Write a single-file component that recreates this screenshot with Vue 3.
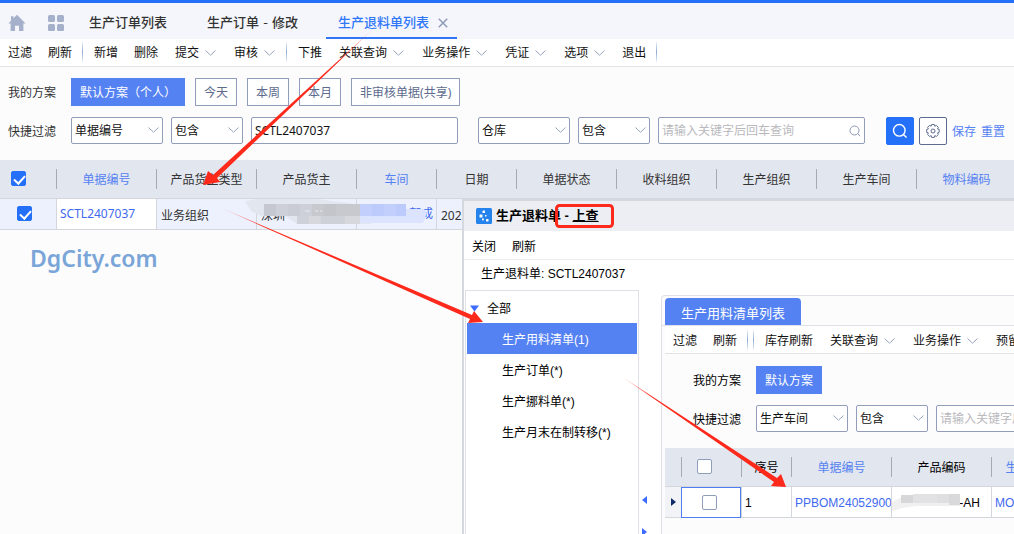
<script setup>
import { ref } from 'vue'

const tabs = ['生产订单列表', '生产订单 - 修改', '生产退料单列表']
const activeTab = ref(2)

const toolbar = [
  { text: '过滤' },
  { text: '刷新' },
  { sep: true },
  { text: '新增' },
  { text: '删除' },
  { text: '提交', menu: true },
  { text: '审核', menu: true },
  { sep: true },
  { text: '下推' },
  { text: '关联查询', menu: true },
  { text: '业务操作', menu: true },
  { text: '凭证', menu: true },
  { text: '选项', menu: true },
  { text: '退出' },
  { sep: true },
]
const innerToolbar = [
  { text: '过滤' },
  { text: '刷新' },
  { sep: true },
  { sep: true },
  { text: '库存刷新' },
  { text: '关联查询', menu: true },
  { text: '业务操作', menu: true },
  { text: '预留', menu: true },
]
const schemes = ['默认方案（个人）', '今天', '本周', '本月', '非审核单据(共享)']
const columns = [
  { text: '单据编号', link: true },
  { text: '产品货主类型' },
  { text: '产品货主' },
  { text: '车间', link: true, narrow: true },
  { text: '日期', narrow: true },
  { text: '单据状态' },
  { text: '收料组织' },
  { text: '生产组织' },
  { text: '生产车间' },
  { text: '物料编码', link: true },
]
const tree = ['生产用料清单(1)', '生产订单(*)', '生产挪料单(*)', '生产月末在制转移(*)']
const activeNode = ref(0)
const keyword = ref('SCTL2407037')
const allChecked = ref(true)
const rowChecked = ref(true)
</script>

<template>
  <div class="page">
    <nav class="tabs">
      <button class="icon-btn" aria-label="首页">
        <svg width="18" height="18" viewBox="0 0 18 18"><path d="M9 .8 17.6 9.4H15.400V17h-4.400v-5.200H7V17H2.600V9.400H.4L3 6.800V2.200h2.500v2.100z" fill="#a5b0cb" /></svg>
      </button>
      <button class="icon-btn" aria-label="应用">
        <svg width="18" height="18" viewBox="0 0 18 18" fill="#a5b0cb"><rect x="1" y="1" width="7" height="7" rx="1.500" /><rect x="10" y="1" width="7" height="7" rx="1.500" /><rect x="1" y="10" width="7" height="7" rx="1.500" /><rect x="10" y="10" width="7" height="7" rx="1.500" /></svg>
      </button>
      <button v-for="(t, i) in tabs" :key="t" class="tab" :class="{ active: i === activeTab }" @click="activeTab = i">
        {{ t }}
        <svg v-if="i === activeTab" class="close" width="10" height="10" viewBox="0 0 10 10"><path d="M.8.8l8.400 8.400M9.200.8.8 9.200" stroke="#8f9bb8" stroke-width="1.500" /></svg>
      </button>
    </nav>

    <div class="toolbar">
      <template v-for="(b, i) in toolbar" :key="i">
        <i v-if="b.sep" class="sep"></i>
        <button v-else class="tool" :class="{ menu: b.menu }">
          {{ b.text }}
          <svg v-if="b.menu" width="11" height="6" viewBox="0 0 11 6"><path d="M.5.5l5 4.700 5-4.700" fill="none" stroke="#98a4bf" /></svg>
        </button>
      </template>
    </div>

    <section class="filters">
      <div class="line">
        <span class="label">我的方案</span>
        <button v-for="(s, i) in schemes" :key="s" class="scheme" :class="{ on: i === 0 }">{{ s }}</button>
      </div>
      <div class="line quick">
        <span class="label">快捷过滤</span>
        <span class="select wide"><select aria-label="字段"><option>单据编号</option></select><svg width="11" height="6" viewBox="0 0 11 6"><path d="M.5.5l5 4.700 5-4.700" fill="none" stroke="#98a4bf" /></svg></span>
        <span class="select"><select aria-label="条件"><option>包含</option></select><svg width="11" height="6" viewBox="0 0 11 6"><path d="M.5.5l5 4.700 5-4.700" fill="none" stroke="#98a4bf" /></svg></span>
        <span class="field"><input v-model="keyword" type="text" aria-label="单据编号值" /></span>
        <span class="select wide second"><select aria-label="字段二"><option>仓库</option></select><svg width="11" height="6" viewBox="0 0 11 6"><path d="M.5.5l5 4.700 5-4.700" fill="none" stroke="#98a4bf" /></svg></span>
        <span class="select"><select aria-label="条件二"><option>包含</option></select><svg width="11" height="6" viewBox="0 0 11 6"><path d="M.5.5l5 4.700 5-4.700" fill="none" stroke="#98a4bf" /></svg></span>
        <span class="field">
          <input type="text" aria-label="仓库值" placeholder="请输入关键字后回车查询" />
          <svg class="glass" width="12" height="12" viewBox="0 0 12 12" fill="none" stroke="#8c98b5"><circle cx="5.500" cy="5.500" r="4.500" /><path d="M8.600 8.600 11.200 11.200" /></svg>
        </span>
        <button class="square search" aria-label="查询">
          <svg width="16" height="16" viewBox="0 0 16 16" fill="none" stroke="#fff" stroke-width="1.400"><circle cx="7.300" cy="7.300" r="5.800" /><path d="M11.400 11.400 14.600 14.600" /></svg>
        </button>
        <button class="square" aria-label="设置">
          <svg width="16" height="16" viewBox="0 0 16 16" fill="none" stroke="#5d6b8e"><path d="M6.700 1.500h2.600l.5 1.700 1.600-.8 1.900 1.900-.8 1.600 1.700.6v2.800l-1.700.6.8 1.600-1.900 1.900-1.600-.8-.5 1.800H6.700l-.6-1.800-1.600.8-1.900-1.900.8-1.600-1.700-.6V6.500l1.700-.6-.8-1.600 1.900-1.900 1.600.8z" stroke-linejoin="round" /><circle cx="8" cy="8" r="2" /></svg>
        </button>
        <a href="#" class="act">保存</a>
        <a href="#" class="act">重置</a>
      </div>
    </section>

    <div class="grid-wrap">
      <table class="grid">
        <colgroup>
          <col class="c-check" />
          <col v-for="c in columns" :key="c.text" :class="c.narrow ? 'c-narrow' : 'c-normal'" />
        </colgroup>
        <thead>
          <tr>
            <th class="check-head"><input v-model="allChecked" type="checkbox" aria-label="全选" /></th>
            <th v-for="c in columns" :key="c.text" :class="{ link: c.link }"><span>{{ c.text }}</span></th>
          </tr>
        </thead>
        <tbody>
          <tr>
            <td class="check-cell"><input v-model="rowChecked" type="checkbox" aria-label="选择 SCTL2407037" /></td>
            <td class="current"><a href="#">SCTL2407037</a></td>
            <td>业务组织</td>
            <td class="masked">
              深圳
              <svg class="mosaic" width="180" height="30" viewBox="0 0 180 30">
                <path d="M-12 2 0 0h60l38 5 16 0v20H40L28 17H4L-6 12z" fill="#e2e6ef" />
                <path d="M7 5h48v12H7z" fill="#cdd0d8" /><path d="M7 5h12v12H7z" fill="#c5c8d0" /><path d="M31 5h12v12H31z" fill="#c9ccd4" />
                <path d="M55 5h48v12H55z" fill="#c8c9ce" /><path d="M67 5h12v12H67z" fill="#c3c5cb" />
                <path d="M40 17h63v8H40z" fill="#cfd1d8" /><path d="M52 17h12v8H52zM88 17h15v8H88z" fill="#d6d8de" />
                <path d="M103 5h46v5h18l3 4-4 10-18 0h-45z" fill="#dbe3fe" />
                <path d="M103 5h46v12h-46z" fill="#c2cffd" /><path d="M115 5h12v12h-12zM139 5h10v12h-10z" fill="#bdcafc" />
                <path d="M48 12h5m5 0h3m2 0h2" stroke="#e8eaee" />
              </svg>
            </td>
            <td class="workshop"><a href="#">部成</a></td>
            <td>202</td>
            <td></td>
            <td></td>
            <td></td>
            <td></td>
            <td></td>
          </tr>
        </tbody>
      </table>
    </div>
    <p class="brand">DgCity.com</p>

    <div class="dialog" role="dialog" aria-label="生产退料单 - 上查">
      <header class="title">
        <svg width="16" height="16" viewBox="0 0 16 16"><rect width="16" height="16" rx="1.500" fill="#2583ee" /><g fill="#fff"><rect x="6.500" y="2.500" width="2.500" height="2.500" rx=".5" /><rect x="3.500" y="6.500" width="3" height="3" rx=".5" /><rect x="9" y="7" width="1.500" height="1.500" /><rect x="6" y="10.500" width="1.800" height="1.800" /><rect x="10" y="11" width="2.500" height="2.500" rx=".5" /></g></svg>
        <h1>生产退料单 - <u>上查</u></h1>
      </header>
      <div class="dialog-bar">
        <button class="tool">关闭</button>
        <button class="tool">刷新</button>
      </div>
      <div class="info">生产退料单: SCTL2407037</div>
      <div class="dialog-body">
        <aside class="tree">
          <button class="node root"><svg width="9" height="7" viewBox="0 0 9 7"><path d="M0 .5h9L4.500 6.500z" fill="#3d6bff" /></svg>全部</button>
          <button v-for="(n, i) in tree" :key="n" class="node" :class="{ on: i === activeNode }" @click="activeNode = i">{{ n }}</button>
        </aside>
        <div class="splitter">
          <svg width="5" height="8" viewBox="0 0 5 8"><path d="M5 0v8L0 4z" fill="#3d6bff" /></svg>
          <svg width="5" height="8" viewBox="0 0 5 8"><path d="M0 0v8l5-4z" fill="#3d6bff" /></svg>
        </div>
        <main class="panel">
          <div class="panel-tabs"><button>生产用料清单列表</button></div>
          <div class="toolbar inner-bar">
            <template v-for="(b, i) in innerToolbar" :key="i">
              <i v-if="b.sep" class="sep"></i>
              <button v-else class="tool" :class="{ menu: b.menu }">
                {{ b.text }}
                <svg v-if="b.menu" width="11" height="6" viewBox="0 0 11 6"><path d="M.5.5l5 4.700 5-4.700" fill="none" stroke="#98a4bf" /></svg>
              </button>
            </template>
          </div>
          <section class="filters">
            <div class="line">
              <span class="label">我的方案</span>
              <button class="scheme on">默认方案</button>
            </div>
            <div class="line quick">
              <span class="label">快捷过滤</span>
              <span class="select wide"><select aria-label="字段三"><option>生产车间</option></select><svg width="11" height="6" viewBox="0 0 11 6"><path d="M.5.5l5 4.700 5-4.700" fill="none" stroke="#98a4bf" /></svg></span>
              <span class="select"><select aria-label="条件三"><option>包含</option></select><svg width="11" height="6" viewBox="0 0 11 6"><path d="M.5.5l5 4.700 5-4.700" fill="none" stroke="#98a4bf" /></svg></span>
              <span class="field"><input type="text" aria-label="生产车间值" placeholder="请输入关键字后回车查询" /></span>
            </div>
          </section>
          <div class="inner-grid">
            <table class="grid">
              <colgroup><col class="c-mark" /><col class="c-box" /><col class="c-no" /><col class="c-normal" /><col class="c-normal" /><col class="c-normal" /></colgroup>
              <thead>
                <tr>
                  <th></th>
                  <th class="box-head"><span><input type="checkbox" aria-label="全选用料清单" /></span></th>
                  <th><span>序号</span></th>
                  <th class="link"><span>单据编号</span></th>
                  <th><span>产品编码</span></th>
                  <th class="link"><span>生产订单编号</span></th>
                </tr>
              </thead>
              <tbody>
                <tr>
                  <td class="mark"><svg width="5" height="8" viewBox="0 0 5 8"><path d="M0 0v8l5-4z" fill="#0f2c66" /></svg></td>
                  <td class="focus"><input type="checkbox" aria-label="选择第 1 行" /></td>
                  <td>1</td>
                  <td><a href="#">PPBOM24052900</a></td>
                  <td class="code">
                    -AH
                    <svg class="mosaic" width="72" height="24" viewBox="0 0 72 24"><path d="M-2 12 10 6l16-3h42v12H24L10 17-2 21z" fill="#f0f0f1" /><rect x="9" y="4" width="12" height="8" fill="#d7d7d9" /><path d="M21 3h12v9H21zM33 3h12v9H33z" fill="#e2e2e4" /><rect x="45" y="3" width="12" height="9" fill="#dfdfe1" /><rect x="57" y="3" width="11" height="11" fill="#d9d9db" /></svg>
                  </td>
                  <td><a href="#">MO240529001</a></td>
                </tr>
              </tbody>
            </table>
          </div>
        </main>
      </div>
    </div>

    <svg class="notes" width="1014" height="534" viewBox="0 0 1014 534">
      <defs>
        <linearGradient id="g1" gradientUnits="userSpaceOnUse" x1="373" y1="29" x2="340" y2="60"><stop offset="0" stop-color="#fd2a1c" stop-opacity=".2" /><stop offset="1" stop-color="#fd2a1c" /></linearGradient>
        <linearGradient id="g2" gradientUnits="userSpaceOnUse" x1="220" y1="208" x2="262" y2="226"><stop offset="0" stop-color="#fd2a1c" stop-opacity=".2" /><stop offset="1" stop-color="#fd2a1c" /></linearGradient>
        <linearGradient id="g3" gradientUnits="userSpaceOnUse" x1="621" y1="376" x2="650" y2="395"><stop offset="0" stop-color="#fd2a1c" stop-opacity=".2" /><stop offset="1" stop-color="#fd2a1c" /></linearGradient>
      </defs>
      <path d="M373 29 213 175 208 171 203 185 220 182 217 178z" fill="url(#g1)" />
      <path d="M220 207.500 472 315 474 311 483 322 468 323 470 319z" fill="url(#g2)" />
      <path d="M621 376 777 478 781 474 786 487 771 486 774 482z" fill="url(#g3)" />
      <rect x="556.500" y="205.500" width="56" height="21" rx="3" fill="none" stroke="#fd2a1c" stroke-width="3" />
    </svg>
  </div>
</template>

<style>
html,
body {
  overflow: hidden;
}
</style>

<style scoped>
.page,
.page * {
  box-sizing: border-box;
}
.page {
  position: relative;
  height: 100vh;
  overflow: hidden;
  border-top: 3px solid #2570f8;
  background: #fcfcfd;
  color: #333;
  font: 12px/20px 'Noto Sans', 'Noto Sans CJK SC', sans-serif;
}
button,
input,
select {
  margin: 0;
  padding: 0;
  border: 0;
  background: none;
  color: inherit;
  font: inherit;
  white-space: nowrap;
}
a {
  color: #3f69f0;
  text-decoration: none;
}
svg {
  flex: none;
}

.tabs {
  display: flex;
  height: 36px;
  background: #f5f6fb;
}
.icon-btn {
  display: flex;
  flex: none;
  align-items: center;
  width: 39px;
  padding: 4px 0 0 8px;
}
.icon-btn:nth-child(2) {
  width: 38px;
}
.tab {
  display: flex;
  align-items: center;
  gap: 9px;
  padding: 6px 28px 0 12px;
  border-bottom: 2px solid transparent;
  font-family: 'DejaVu Sans', 'Noto Sans CJK SC', sans-serif;
  font-size: 13px;
  font-weight: 500;
}
.tab.active {
  padding-right: 9px;
  border-color: #2f76f8;
  color: #2f76f8;
}

.toolbar {
  display: flex;
  height: 28px;
  border-bottom: 1px solid #e3e3e6;
  background: #fff;
  color: #111;
}
.toolbar > * {
  flex: none;
}
.tool {
  display: flex;
  align-items: center;
  gap: 6px;
  padding: 0 8px;
}
.tool.menu {
  padding: 0 9px;
}
.sep {
  width: 1px;
  height: 20px;
  margin: 3px 3px 3px 2px;
  background: linear-gradient(#e6effc, #8fa9d0, #e6effc);
}

.filters {
  padding: 11px 0 15px 8px;
}
.line {
  display: flex;
  gap: 10px;
}
.line > * {
  flex: none;
}
.quick {
  gap: 8px;
  height: 28px;
  margin-top: 11px;
}
.label {
  width: 53px;
  line-height: 30px;
  height: 28px;
}
.quick .label {
  width: 55px;
}
.scheme {
  height: 28px;
  padding: 1px 8px 0;
  border: 1px solid #8f9dbb;
  background: #fff;
  color: #5d6b8e;
}
.scheme.on {
  border-color: #5582f3;
  background: #5582f3;
  color: #fff;
}
.select {
  position: relative;
  width: 72px;
  height: 27px;
}
.select.wide {
  width: 92px;
}
.second {
  margin-left: 12px;
}
.select select,
.field input {
  width: 100%;
  height: 27px;
  padding: 0 3px;
  border: 1px solid #919dba;
  border-radius: 2px;
  appearance: none;
  background: #fff;
  color: #111;
}
.select svg {
  position: absolute;
  top: 10px;
  right: 4px;
  pointer-events: none;
}
.field {
  position: relative;
  width: 207px;
}
.field input::placeholder {
  color: #b9b9bd;
  opacity: 1;
}
.glass {
  position: absolute;
  top: 8px;
  right: 4px;
}
.square {
  display: flex;
  align-items: center;
  justify-content: center;
  width: 28px;
  height: 28px;
  border: 1px solid #5d6b8e;
  border-radius: 2px;
  background: #fff;
}
.square.search {
  margin-left: 13px;
  border-color: #2570f8;
  background: #2570f8;
}
.square + .square {
  margin-left: -3px;
}
.act {
  margin-left: -3px;
  color: #5582f3;
  line-height: 30px;
}

.grid-wrap,
.inner-grid {
  overflow: hidden;
}
.grid {
  table-layout: fixed;
  width: 0;
  min-width: 100%;
  border-spacing: 0;
}
.c-check {
  width: 56px;
}
.c-normal {
  width: 100px;
}
.c-narrow {
  width: 80px;
}
.c-mark {
  width: 16px;
}
.c-box {
  width: 60px;
}
.c-no {
  width: 50px;
}
th {
  height: 39px;
  padding: 0;
  border-bottom: 1px solid #d3d6dd;
  background: #e2e6ee;
  font-weight: 400;
}
th span {
  display: block;
  height: 20px;
  overflow: hidden;
  border-left: 1px solid #a5aab5;
  line-height: 22px;
  white-space: nowrap;
}
th.link {
  color: #5582f3;
}
td {
  height: 31px;
  padding: 4px 0 0 4px;
  overflow: hidden;
  border-bottom: 1px solid #d3d6dd;
  border-left: 1px solid #d3d6dd;
  background: #edf1fd;
  white-space: nowrap;
}
td.current {
  padding: 0 0 0 3px;
  background: #fff;
}
th.check-head {
  padding: 0 0 2px 11px;
  text-align: left;
}
td.check-cell {
  padding: 0 0 2px 17px;
  border-left: 0;
}
input[type='checkbox'] {
  display: block;
  position: relative;
  width: 15px;
  height: 15px;
  border: 1px solid #8f9dbb;
  border-radius: 2px;
  appearance: none;
  background: #fff;
}
input[type='checkbox']:checked {
  border-color: #2570f8;
  background: #2570f8;
}
input[type='checkbox']:checked::after {
  content: '';
  position: absolute;
  top: 1px;
  left: 4px;
  width: 5px;
  height: 9px;
  border: solid #fff;
  border-width: 0 2px 2px 0;
  transform: rotate(42deg);
}
td.masked {
  position: relative;
  overflow: visible;
}
.mosaic {
  position: absolute;
  top: 0;
  left: 0;
  overflow: visible;
}
td.workshop {
  padding: 0 3px 0 0;
  text-align: right;
}
.brand {
  margin: 16px 30px;
  color: #7aa5d8;
  font-size: 23px;
  font-weight: 600;
  line-height: 24px;
}

.dialog {
  display: flex;
  position: absolute;
  top: 195px;
  right: 0;
  bottom: 0;
  left: 462px;
  flex-direction: column;
  overflow: hidden;
  border-top: 3px solid #d6d8df;
  border-left: 2px solid #d6d8df;
  background: #fff;
  color: #000;
  font-family: 'Liberation Sans', 'Noto Sans CJK SC', sans-serif;
}
.dialog > * {
  flex: none;
}
.title {
  display: flex;
  align-items: center;
  gap: 4px;
  height: 30px;
  padding-left: 12px;
  background: #edeef3;
}
h1 {
  margin: 0;
  font-size: 13px;
  font-weight: 700;
  line-height: 22px;
}
.dialog-bar {
  display: flex;
  height: 29px;
  padding-top: 4px;
  border-bottom: 1px solid #ececef;
}
.info {
  height: 30px;
  padding-left: 17px;
  line-height: 28px;
}
.dialog .dialog-body {
  display: flex;
  flex: 1;
  min-height: 0;
}
.tree {
  width: 174px;
  margin-left: 1px;
  padding: 1px 1px 0;
  border: 1px solid #dfdfe6;
  border-bottom: 0;
}
.node {
  display: block;
  width: 100%;
  height: 31px;
  padding: 2px 0 0 35px;
  text-align: left;
}
.node.root {
  display: flex;
  align-items: center;
  gap: 8px;
  padding-left: 3px;
}
.node.on {
  background: #5582f3;
  color: #fff;
}
.splitter {
  display: flex;
  flex-direction: column;
  gap: 24px;
  width: 22px;
  padding: 206px 0 0 3px;
}
.panel {
  flex: 1;
  min-width: 0;
  margin-top: 5px;
  overflow: hidden;
  border-top: 1px solid #dfe1ea;
  border-left: 1px solid #dfe1ea;
  border-top-left-radius: 4px;
  background: #fcfcfd;
}
.panel-tabs {
  padding: 2px 0 0 3px;
  border-bottom: 1px solid #dfe1ea;
}
.panel-tabs button {
  display: block;
  height: 27px;
  padding: 4px 16px 0;
  border-radius: 4px 4px 0 0;
  background: #5582f3;
  color: #fff;
  font-size: 13px;
}
.inner-bar {
  margin-left: 3px;
  padding-top: 3px;
}
.inner-bar .sep {
  margin-top: 1px;
}
.panel .filters {
  padding-top: 12px;
  padding-left: 31px;
}
.inner-grid {
  margin-left: 3px;
}
.inner-grid td {
  padding: 2px 0 0 3px;
  background: #fff;
}
.box-head span {
  padding: 2px 0 0 15px;
}
.inner-grid td.mark {
  padding: 0 0 0 6px;
  border-left: 0;
  background: #f2f3f7;
}
.mark svg {
  display: block;
}
.inner-grid td.focus {
  padding: 0 0 0 20px;
  border: 1px solid #4f7df2;
}
.inner-grid td.code {
  position: relative;
  padding-right: 11px;
  text-align: right;
}
.code .mosaic {
  top: 4px;
}

.notes {
  position: absolute;
  top: -3px;
  left: 0;
  pointer-events: none;
}
</style>
